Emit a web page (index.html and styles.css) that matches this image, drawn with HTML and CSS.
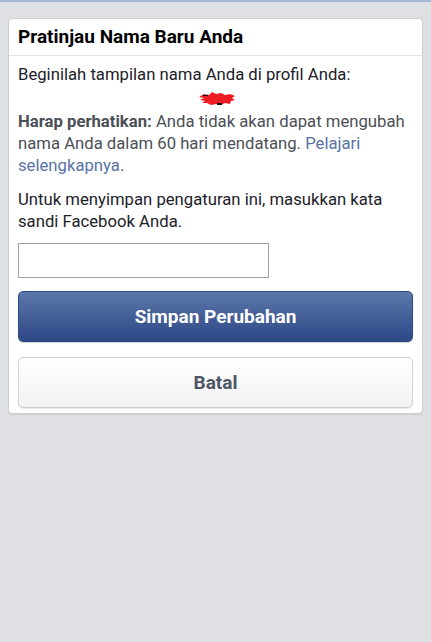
FILE: index.html
```html
<!DOCTYPE html>
<html lang="id">
<head>
<meta charset="utf-8">
<link rel="stylesheet" href="styles.css">
</head>
<body>
<div class="topline"></div>
<main class="page">
  <section class="card">
    <header class="card-head">Pratinjau Nama Baru Anda</header>
    <div class="card-body">
      <p class="intro">Beginilah tampilan nama Anda di profil Anda:</p>
      <div class="name-preview">
        <svg width="40" height="18" viewBox="0 0 40 18" aria-hidden="true">
          <path d="M2 7 L7 4 L12 5 L15 2 L19 4 L24 3 L28 5 L33 4 L38 6 L35 8 L38 10 L34 11 L33 14 L28 13 L24 15 L19 14 L14 15 L10 13 L5 13 L8 11 L3 10 L7 8 Z" fill="#ee1c25"/>
          <rect x="20" y="13" width="5" height="2" fill="#111"/>
          <rect x="6" y="5" width="5" height="1" fill="#111"/>
        </svg>
      </div>
      <p class="note"><strong>Harap perhatikan:</strong> Anda tidak akan dapat mengubah nama Anda dalam 60 hari mendatang. <a href="#" class="link">Pelajari selengkapnya</a>.</p>
      <p class="instr">Untuk menyimpan pengaturan ini, masukkan kata sandi Facebook Anda.</p>
      <input class="pw" type="password" aria-label="Kata sandi">
      <button class="btn btn-primary" type="button">Simpan Perubahan</button>
      <button class="btn btn-cancel" type="button">Batal</button>
    </div>
  </section>
</main>
</body>
</html>
```
FILE: styles.css
```css
* { box-sizing: border-box; }
html, body {
  margin: 0;
  padding: 0;
  background: #dfe0e4;
  font-family: Roboto, "Noto Sans", "Liberation Sans", sans-serif;
  color: #1d2129;
}
.topline {
  height: 2px;
  background: #a4b6da;
}
.page {
  padding: 16px 8px 8px 8px;
}
.card {
  background: #fff;
  border: 1px solid #cdced1;
  border-radius: 4px;
  box-shadow: 0 1px 1px rgba(0,0,0,0.08);
}
.card-head {
  font-weight: 700;
  font-size: 19px;
  line-height: 22px;
  padding: 7px 9px 7px;
  border-bottom: 1px solid #e5e5e5;
  color: #000;
}
.card-body {
  padding: 8px 9px 5px;
  display: flex;
  flex-direction: column;
}
p { margin: 0; }
.intro {
  font-size: 16.7px;
  line-height: 21px;
}
.name-preview {
  display: flex;
  justify-content: center;
  padding: 5px 0 0 0;
  height: 26px;
}
.name-preview svg { margin-left: 2px; }
.note {
  font-size: 16.7px;
  line-height: 22px;
  color: #4b4f56;
}
.note strong { font-weight: 700; }
.link {
  color: #5872a6;
  text-decoration: none;
}
.instr {
  margin-top: 12px;
  font-size: 16.7px;
  line-height: 21.5px;
}
.pw {
  margin-top: 11px;
  width: 251px;
  height: 35px;
  border: 1px solid #a0a0a0;
  background: #fff;
  border-radius: 0;
  padding: 0 6px;
  font-size: 16px;
}
.btn {
  font-family: Roboto, "Noto Sans", "Liberation Sans", sans-serif;
  font-weight: 700;
  font-size: 19px;
  width: 100%;
  height: 51px;
  border-radius: 5px;
  cursor: pointer;
}
.btn-primary {
  margin-top: 13px;
  color: #fff;
  border: 1px solid #2f4b86;
  background: linear-gradient(#5b77a9, #2d4886);
  box-shadow: 0 1px 1px rgba(0,0,0,0.2);
}
.btn-cancel {
  margin-top: 15px;
  color: #4e5665;
  border: 1px solid #d0d1d4;
  background: linear-gradient(#ffffff, #f2f2f2);
  box-shadow: 0 1px 1px rgba(0,0,0,0.08);
}
```
